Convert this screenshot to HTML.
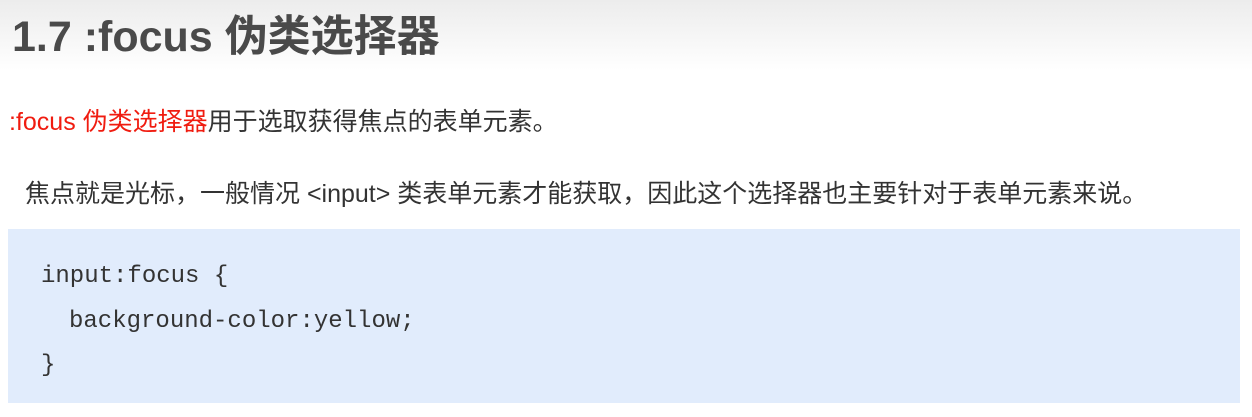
<!DOCTYPE html>
<html><head><meta charset="utf-8"><style>
body{margin:0;width:1252px;height:417px;overflow:hidden;background:#fff;position:relative;font-family:"Liberation Sans","Noto Sans CJK SC",sans-serif}
.top{position:absolute;left:0;top:0;width:1252px;height:70px;background:linear-gradient(#ececec,#fff)}
h1{position:absolute;left:12px;top:2px;margin:0;font-size:43px;font-weight:bold;color:#4a4a4a;white-space:nowrap}
.p1{position:absolute;left:9px;top:102px;font-size:25px;color:#333;white-space:nowrap}
.p1 span{color:#f01c10}
.p2{position:absolute;left:25px;top:174px;font-size:25px;color:#333;white-space:nowrap}
.code{position:absolute;left:8px;top:229px;width:1232px;height:174px;background:#e1ecfc}
.code div{position:absolute;font-family:"Liberation Mono",monospace;font-size:24px;color:#333;white-space:pre}
</style></head><body>
<div class="top"></div>
<h1>1.7 :focus 伪类选择器</h1>
<div class="p1"><span>:focus 伪类选择器</span>用于选取获得焦点的表单元素。</div>
<div class="p2">焦点就是光标，一般情况 &lt;input&gt; 类表单元素才能获取，因此这个选择器也主要针对于表单元素来说。</div>
<div class="code">
<div style="left:33px;top:34px">input:focus {</div>
<div style="left:61px;top:79px">background-color:yellow;</div>
<div style="left:33px;top:123px">}</div>
</div>
</body></html>
